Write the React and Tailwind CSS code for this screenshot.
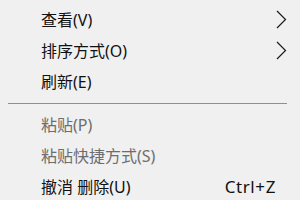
import React from 'react';

const Chevron = () => (
  <svg width="11" height="19" viewBox="0 0 11 19" className="block">
    <path d="M1 1 L9.5 9.5 L1 18" fill="none" stroke="#1a1a1a" strokeWidth="1.2" />
  </svg>
);

const Row = ({ label, disabled, arrow, shortcut }) => (
  <div className="flex h-[31px] items-center pl-[41px]">
    <span className={disabled ? 'text-[#6d6d6d]' : 'text-[#111111]'}>{label}</span>
    <div className="flex-1" />
    {arrow && <div className="mr-[13px]"><Chevron /></div>}
    {shortcut && <span className="mr-[24px] text-[17px] tracking-[0.6px] text-[#111111]">{shortcut}</span>}
  </div>
);

export default function App() {
  return (
    <div
      className="h-[200px] w-[300px] overflow-hidden bg-[#f0f0f0] pt-[4px] text-[16px] leading-none"
      style={{ fontFamily: '"Noto Sans", "Noto Sans CJK SC", sans-serif' }}
    >
      <Row label="查看(V)" arrow />
      <Row label="排序方式(O)" arrow />
      <Row label="刷新(E)" />
      <div className="flex h-[12px] items-center px-[8px] pr-[13px]">
        <div className="h-px w-full bg-[#8f8f8f]" />
      </div>
      <Row label="粘贴(P)" disabled />
      <Row label="粘贴快捷方式(S)" disabled />
      <Row label="撤消 删除(U)" shortcut="Ctrl+Z" />
    </div>
  );
}
